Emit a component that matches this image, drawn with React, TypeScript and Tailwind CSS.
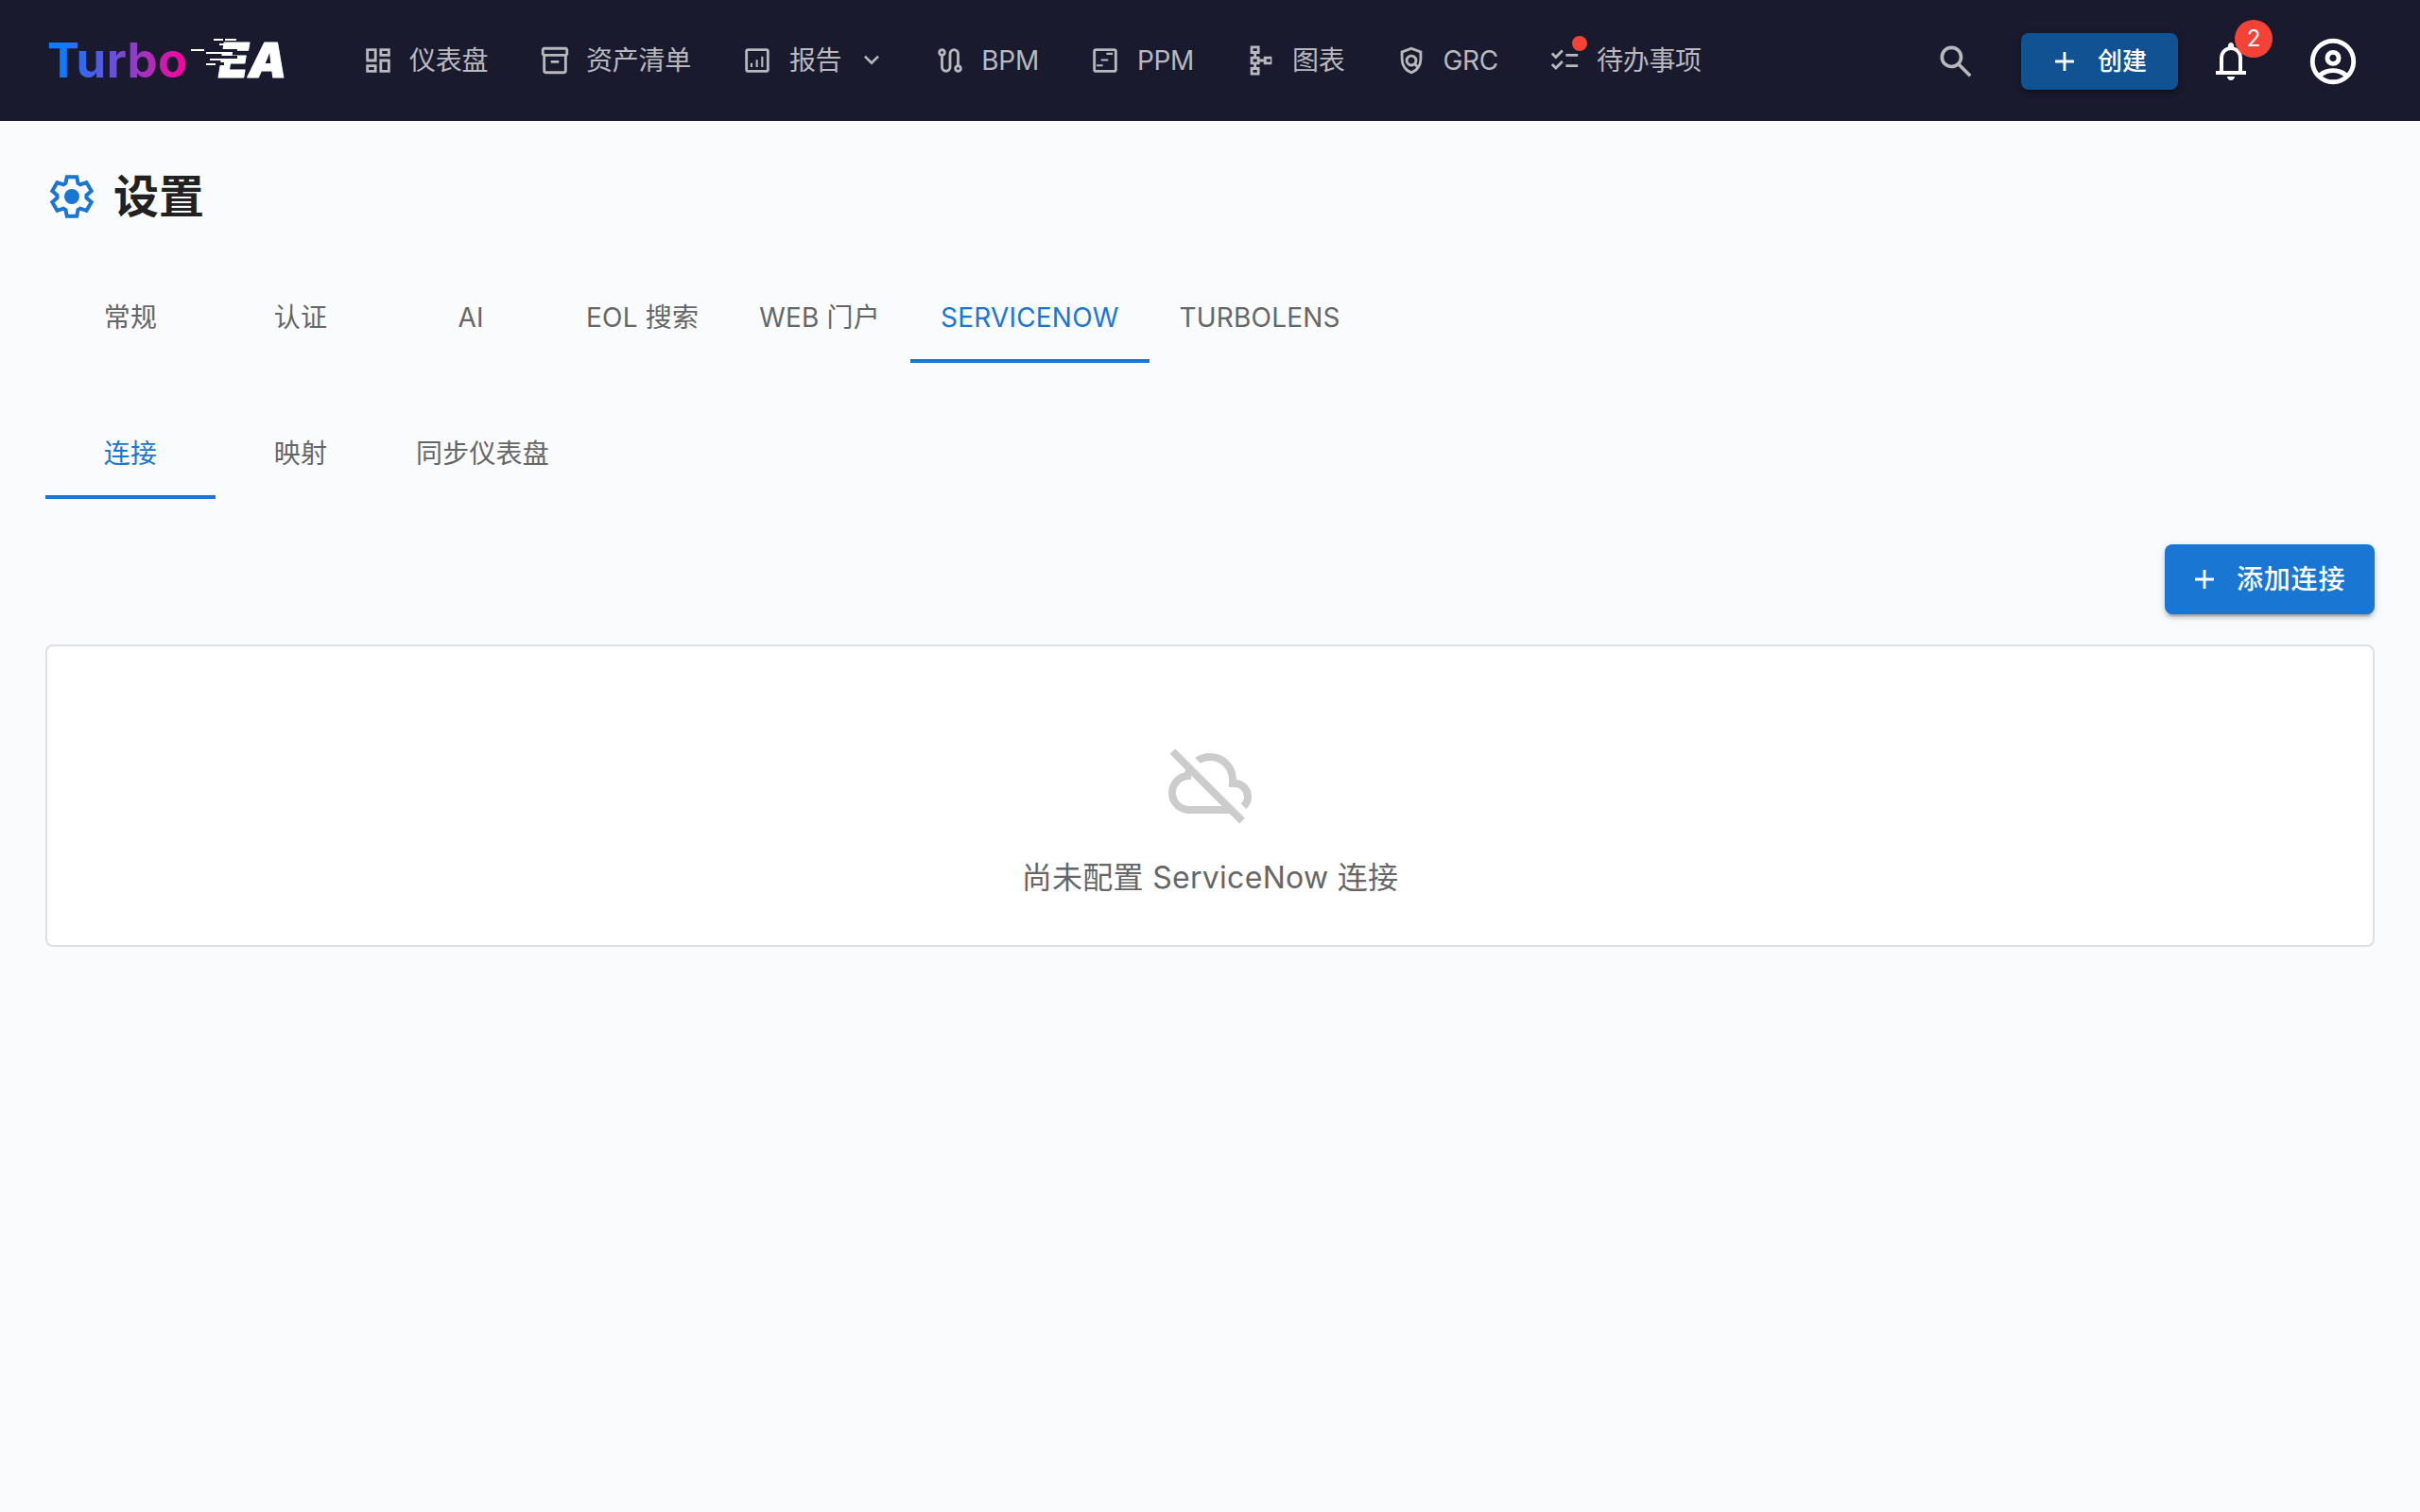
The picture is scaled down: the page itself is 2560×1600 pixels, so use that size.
import React from "react";

const P = {
  dashboard: "M520-600v-240h320v240H520ZM120-440v-400h320v400H120Zm400 320v-400h320v400H520Zm-400 0v-240h320v240H120Zm80-400h160v-240H200v240Zm400 320h160v-240H600v240Zm0-480h160v-80H600v80ZM200-200h160v-80H200v80Z",
  inventory: "M200-80q-33 0-56.5-23.5T120-160v-451q-18-11-29-28.5T80-680v-120q0-33 23.5-56.5T160-880h640q33 0 56.5 23.5T880-800v120q0 23-11 40.5T840-611v451q0 33-23.5 56.5T760-80H200Zm0-520v440h560v-440H200Zm-40-80h640v-120H160v120Zm200 280h240v-80H360v80Z",
  report: "M280-280h60v-120h-60v120Zm320 0h60v-320h-60v320Zm-160 0h60v-220h-60v220ZM200-120q-33 0-56.5-23.5T120-200v-560q0-33 23.5-56.5T200-840h560q33 0 56.5 23.5T840-760v560q0 33-23.5 56.5T760-120H200Zm0-80h560v-560H200v560Z",
  route: "M360-120q-66 0-113-47t-47-113v-327q-35-13-57.5-43.5T120-720q0-50 35-85t85-35q50 0 85 35t35 85q0 39-22.5 69.5T280-607v327q0 33 23.5 56.5T360-200q33 0 56.5-23.5T440-280v-400q0-66 47-113t113-47q66 0 113 47t47 113v327q35 13 57.5 43.5T840-240q0 50-35 85t-85 35q-50 0-85-35t-35-85q0-39 22.5-70t57.5-43v-327q0-33-23.5-56.5T600-760q-33 0-56.5 23.5T520-680v400q0 66-47 113t-113 47ZM240-680q17 0 28.5-11.5T280-720q0-17-11.5-28.5T240-760q-17 0-28.5 11.5T200-720q0 17 11.5 28.5T240-680Zm480 480q17 0 28.5-11.5T760-240q0-17-11.5-28.5T720-280q-17 0-28.5 11.5T680-240q0 17 11.5 28.5T720-200Z",
  timeline: "M520-710h190v60H520v-60ZM360-523h213v60H360v-60ZM227-363h186v60H227v-60ZM200-120q-33 0-56.5-23.5T120-200v-560q0-33 23.5-56.5T200-840h560q33 0 56.5 23.5T840-760v560q0 33-23.5 56.5T760-120H200Zm0-80h560v-560H200v560Z",
  schema: "M160-40v-240h100v-80H160v-240h100v-80H160v-240h280v240H340v80h100v80h120v-80h240v240H560v-80H440v80H340v80h100v240H160Zm80-80h120v-80H240v80Zm0-320h120v-80H240v80Zm400 0h120v-80H640v80ZM240-760h120v-80H240v80Z",
  shield: "M480-80q-139-35-229.5-159.5T160-516v-244l320-120 320 120v244q0 152-90.5 276.5T480-80Zm0-84q104-33 172-132t68-220v-189l-240-90-240 90v189q0 121 68 220t172 132ZM480-300q-75 0-127.5-52.5T300-480q0-75 52.5-127.5T480-660q75 0 127.5 52.5T660-480q0 29-8 54t-22 47l62 62-56 56-64-62q-20 11-44 17t-48 6Zm0-80q42 0 71-29t29-71q0-42-29-71t-71-29q-42 0-71 29t-29 71q0 42 29 71t71 29Z",
  checklist: "M222-200 80-342l56-56 85 85 170-170 56 57-225 226Zm0-320L80-662l56-56 85 85 170-170 56 57-225 226Zm298 240v-80h360v80H520Zm0-320v-80h360v80H520Z",
  chevron: "M480-344 240-584l56-56 184 184 184-184 56 56-240 240Z",
  search: "M784-120 532-372q-30 24-69 38t-83 14q-109 0-184.5-75.5T120-580q0-109 75.5-184.5T380-840q109 0 184.5 75.5T640-580q0 44-14 83t-38 69l252 252-56 56ZM380-400q75 0 127.5-52.5T560-580q0-75-52.5-127.5T380-760q-75 0-127.5 52.5T200-580q0 75 52.5 127.5T380-400Z",
  add: "M440-440H200v-80h240v-240h80v240h240v80H520v240h-80v-240Z",
  bell: "M160-200v-80h80v-280q0-83 50-147.5T420-792v-28q0-25 17.5-42.5T480-880q25 0 42.5 17.5T540-820v28q80 20 130 84.5T720-560v280h80v80H160Zm320 120q-33 0-56.5-23.5T400-160h160q0 33-23.5 56.5T480-80ZM320-280h320v-280q0-66-47-113t-113-47q-66 0-113 47t-47 113v280Z",
  account: "M234-276q51-39 114-61.5T480-360q69 0 132 22.5T726-276q35-41 54.5-93T800-480q0-133-93.5-226.5T480-800q-133 0-226.5 93.5T160-480q0 59 19.5 111t54.5 93Zm246-124q-59 0-99.5-40.5T340-540q0-59 40.5-99.5T480-680q59 0 99.5 40.5T620-540q0 59-40.5 99.5T480-400Zm0 320q-83 0-156-31.5T197-197q-54-54-85.5-127T80-480q0-83 31.5-156T197-763q54-54 127-85.5T480-880q83 0 156 31.5T763-763q54 54 85.5 127T880-480q0 83-31.5 156T763-197q-54 54-127 85.5T480-80Zm0-80q53 0 100-15.5t86-44.5q-39-29-86-44.5T480-280q-53 0-100 15.5T294-220q39 29 86 44.5T480-160Zm0-320q26 0 43-17t17-43q0-26-17-43t-43-17q-26 0-43 17t-17 43q0 26 17 43t43 17Z",
  cloudOff: "M792-56 686-160H260q-92 0-156-64T40-380q0-77 47.5-137T210-594q3-8 6-15.5t6-16.5L56-792l56-56 736 736-56 56ZM260-240h346L284-562q-2 11-3 21t-1 21h-20q-58 0-99 41t-41 99q0 58 41 99t99 41Zm604 30-58-56q17-14 25.5-32.5T840-340q0-42-29-71t-71-29h-60v-80q0-83-58.5-141.5T480-720q-27 0-52 6.5T380-693l-58-58q35-24 74.5-36.5T480-800q117 0 198.5 81.5T760-520q69 8 114.5 59.5T920-340q0 39-15 72.5T864-210Z",
};

function Icon({ d, className }: { d: string; className: string }) {
  return (
    <svg viewBox="0 -960 960 960" fill="currentColor" className={className}>
      <path d={d} />
    </svg>
  );
}

function Logo() {
  return (
    <svg width="260" height="76" viewBox="0 0 260 76" className="shrink-0">
      <defs>
        <linearGradient id="turbo" x1="0" x2="1" y1="0" y2="0">
          <stop offset="0.1" stopColor="#0f7bff" />
          <stop offset="0.55" stopColor="#7d47cf" />
          <stop offset="1" stopColor="#ff0099" />
        </linearGradient>
      </defs>
      <text x="0" y="56" fontFamily="Inter, sans-serif" fontWeight="700" fontSize="51" letterSpacing="0.3" fill="url(#turbo)">
        Turbo
      </text>
      <text x="181" y="56" fontFamily="Inter, sans-serif" fontWeight="900" fontStyle="italic" fontSize="51" fill="#fff" stroke="#fff" strokeWidth="1" strokeLinejoin="round">
        EA
      </text>
      <g fill="#1a1a2e">
        <rect x="179" y="26" width="22" height="3" />
        <rect x="175" y="33" width="26" height="3" />
        <rect x="177" y="40" width="10" height="3" />
      </g>
      <g fill="#fff">
        <rect x="176" y="15" width="10" height="2" />
        <rect x="188" y="15" width="12" height="2" />
        <rect x="182" y="20" width="20" height="2" />
        <rect x="152" y="26" width="14" height="2" />
        <rect x="168" y="29" width="24" height="2" />
        <rect x="172" y="36" width="16" height="2" />
        <rect x="168" y="41" width="10" height="2" />
      </g>
    </svg>
  );
}

function Gear() {
  const pts: string[] = [];
  for (let i = 0; i < 6; i++) {
    const a = (i * 60 - 90) * (Math.PI / 180);
    for (const [r, o] of [[15.5, -25], [21.5, -14], [21.5, 14], [15.5, 25]] as const) {
      const t = a + (o * Math.PI) / 180;
      pts.push(`${(24 + r * Math.cos(t)).toFixed(2)},${(24 + r * Math.sin(t)).toFixed(2)}`);
    }
  }
  return (
    <svg viewBox="0 0 48 48" className="ml-[4px] h-[48px] w-[48px]">
      <polygon points={pts.join(" ")} fill="none" stroke="#1976d2" strokeWidth="4" />
      <circle cx="24" cy="24" r="8" fill="#1976d2" />
    </svg>
  );
}

function NavItem({ d, label, chevron, dot }: { d: string; label: string; chevron?: boolean; dot?: boolean }) {
  return (
    <div className="relative flex h-[72px] items-center pl-[18.5px] pr-[23px] whitespace-nowrap">
      <Icon d={d} className="mr-[16.5px] h-[34px] w-[34px]" />
      <span className="text-[28px] leading-[40px] tracking-[-0.3px]">{label}</span>
      {chevron && <Icon d={P.chevron} className="ml-[16px] -mr-[4px] h-[32px] w-[32px]" />}
      {dot && <span className="absolute left-[43px] top-[10px] h-[16px] w-[16px] rounded-full bg-[#f44336]" />}
    </div>
  );
}

function Tab({ label, active }: { label: string; active?: boolean }) {
  return (
    <div
      className={
        active
          ? "flex h-[96px] min-w-[180px] items-center justify-center px-[32px] text-[28px] font-normal uppercase tracking-[0.2px] whitespace-nowrap text-[#1976d2] shadow-[inset_0_-4px_0_#1976d2]"
          : "flex h-[96px] min-w-[180px] items-center justify-center px-[32px] text-[28px] font-normal uppercase tracking-[0.2px] whitespace-nowrap text-[#666666]"
      }
    >
      {label}
    </div>
  );
}

export default function App() {
  return (
    <div className="min-h-screen bg-[#fafbfd] font-['Inter','Noto_Sans_CJK_SC',sans-serif]">
      <header className="flex h-[128px] items-center bg-[#1a1a2e] pl-[50px] pr-[63px] text-[#b8b8bf]">
        <Logo />
        <nav className="ml-[54px] flex items-center gap-[12px]">
          <NavItem d={P.dashboard} label="仪表盘" />
          <NavItem d={P.inventory} label="资产清单" />
          <NavItem d={P.report} label="报告" chevron />
          <NavItem d={P.route} label="BPM" />
          <NavItem d={P.timeline} label="PPM" />
          <NavItem d={P.schema} label="图表" />
          <NavItem d={P.shield} label="GRC" />
          <NavItem d={P.checklist} label="待办事项" dot />
        </nav>
        <div className="ml-auto flex items-center pt-[1px]">
          <Icon d={P.search} className="h-[44px] w-[44px]" />
          <button className="ml-[47px] flex h-[60px] w-[166px] items-center rounded-[8px] bg-[#115293] pl-[29px] text-[26px] font-medium text-white shadow-[0_6px_2px_-4px_rgba(0,0,0,0.2),0_4px_4px_0_rgba(0,0,0,0.14),0_2px_10px_0_rgba(0,0,0,0.12)]">
            <Icon d={P.add} className="mr-[18px] h-[34px] w-[34px]" />
            创建
          </button>
          <div className="relative ml-[32px] h-[48px] w-[48px] text-white">
            <Icon d={P.bell} className="h-[48px] w-[48px]" />
            <span className="absolute left-[28px] top-[-20px] flex h-[40px] w-[40px] items-center justify-center rounded-full bg-[#f44336] text-[24px] text-white">
              2
            </span>
          </div>
          <Icon d={P.account} className="ml-[55px] h-[58px] w-[58px] text-white" />
        </div>
      </header>

      <main className="px-[48px] pt-[52px]">
        <div className="flex h-[56px] items-center gap-[20px]">
          <Gear />
          <h1 className="text-[48px] font-bold leading-[56px] text-[#212121]">设置</h1>
        </div>

        <div className="mt-[52px] flex">
          <Tab label="常规" />
          <Tab label="认证" />
          <Tab label="AI" />
          <Tab label="EOL 搜索" />
          <Tab label="WEB 门户" />
          <Tab label="ServiceNow" active />
          <Tab label="TurboLens" />
        </div>

        <div className="mt-[48px] flex">
          <Tab label="连接" active />
          <Tab label="映射" />
          <Tab label="同步仪表盘" />
        </div>

        <div className="mt-[48px] flex justify-end">
          <button className="flex h-[74px] w-[222px] items-center rounded-[8px] bg-[#1976d2] pl-[24px] text-[28px] font-medium tracking-[0.8px] text-white shadow-[0_6px_2px_-4px_rgba(0,0,0,0.2),0_4px_4px_0_rgba(0,0,0,0.14),0_2px_10px_0_rgba(0,0,0,0.12)]">
            <Icon d={P.add} className="ml-[1px] mr-[17px] h-[34px] w-[34px]" />
            添加连接
          </button>
        </div>

        <section className="mt-[32px] flex h-[320px] flex-col items-center rounded-[8px] border-2 border-[#e0e0e0] bg-white pt-[97px]">
          <Icon d={P.cloudOff} className="h-[96px] w-[96px] text-[#cccccc]" />
          <p className="mt-[28px] text-[32px] leading-[48px] tracking-[0.3px] text-[#666666]">尚未配置 ServiceNow 连接</p>
        </section>
      </main>
    </div>
  );
}
